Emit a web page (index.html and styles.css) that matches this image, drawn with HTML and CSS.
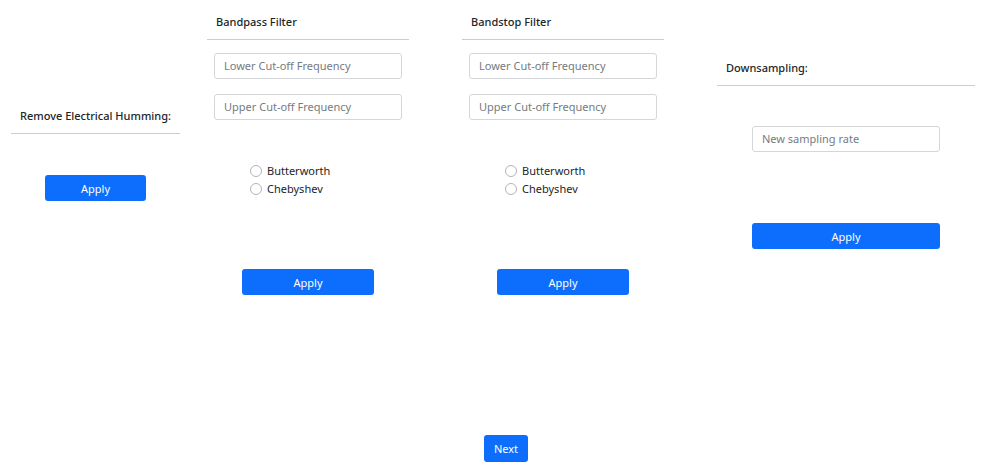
FILE: index.html
```html
<!DOCTYPE html>
<html>
<head>
<meta charset="utf-8">
<link rel="stylesheet" href="styles.css">
</head>
<body>
<div class="page">
  <div class="row">
    <section class="col col-hum">
      <div class="title center">Remove Electrical Humming:</div>
      <hr class="rule">
      <button class="btn btn-hum">Apply</button>
    </section>
    <section class="col col-filter">
      <div class="title">Bandpass Filter</div>
      <hr class="rule">
      <input class="field first" placeholder="Lower Cut-off Frequency">
      <input class="field second" placeholder="Upper Cut-off Frequency">
      <div class="radios">
        <label class="radio"><input type="radio" name="bp"><span>Butterworth</span></label>
        <label class="radio"><input type="radio" name="bp"><span>Chebyshev</span></label>
      </div>
      <button class="btn btn-filter">Apply</button>
    </section>
    <section class="col col-filter">
      <div class="title">Bandstop Filter</div>
      <hr class="rule">
      <input class="field first" placeholder="Lower Cut-off Frequency">
      <input class="field second" placeholder="Upper Cut-off Frequency">
      <div class="radios">
        <label class="radio"><input type="radio" name="bs"><span>Butterworth</span></label>
        <label class="radio"><input type="radio" name="bs"><span>Chebyshev</span></label>
      </div>
      <button class="btn btn-filter">Apply</button>
    </section>
    <section class="col col-down">
      <div class="title">Downsampling:</div>
      <hr class="rule">
      <input class="field down" placeholder="New sampling rate">
      <button class="btn btn-down">Apply</button>
    </section>
  </div>
  <button class="btn btn-next">Next</button>
</div>
</body>
</html>
```
FILE: styles.css
```css
* { box-sizing: border-box; }
html, body { margin: 0; padding: 0; background: #fff; }
body {
  font-family: "Noto Sans", "Open Sans", sans-serif;
  font-size: 11px;
  color: #212529;
}
.page { padding: 14px 0 0 11px; display: flex; flex-direction: column; }
.row { display: flex; align-items: center; }
.col { display: flex; flex-direction: column; }
.col-hum { width: 169px; margin-right: 27px; }
.col-filter { width: 202px; margin-right: 53px; }
.col-down { width: 258px; }
.title {
  font-weight: 500;
  line-height: 16px;
  height: 16px;
  padding-left: 9px;
}
.title.center { padding-left: 0; text-align: center; }
.rule {
  margin: 9px 0 0;
  border: 0;
  border-top: 1px solid #cccccc;
  height: 0;
}
.field {
  display: block;
  width: 188px;
  height: 26px;
  border: 1px solid #d4d6da;
  border-radius: 3px;
  padding: 0 9px 1px;
  font-family: inherit;
  font-size: 11px;
  color: #212529;
  align-self: center;
  outline: none;
}
.field::placeholder { color: #767b80; }
.field.first { margin-top: 13px; }
.field.second { margin-top: 15px; }
.field.down { margin-top: 40px; }
.radios { margin-top: 42px; padding-left: 43px; display: flex; flex-direction: column; }
.radio { display: flex; align-items: center; height: 18px; line-height: 18px; }
.radio input {
  appearance: none;
  -webkit-appearance: none;
  width: 12px;
  height: 12px;
  margin: 0 5px 0 0;
  border: 1px solid #b4b4b4;
  border-radius: 50%;
  background: #fff;
}
.btn {
  display: block;
  height: 26px;
  border: 0;
  border-radius: 3px;
  background: #0d6efd;
  color: #fff;
  font-family: inherit;
  font-size: 11px;
  padding: 0;
  align-self: center;
}
.btn-hum { width: 101px; margin-top: 41px; }
.btn-filter { width: 132px; margin-top: 71px; }
.btn-down { width: 188px; margin-top: 71px; }
.btn-next { width: 44px; height: 27px; margin-top: 140px; margin-left: 473px; align-self: flex-start; }
```
